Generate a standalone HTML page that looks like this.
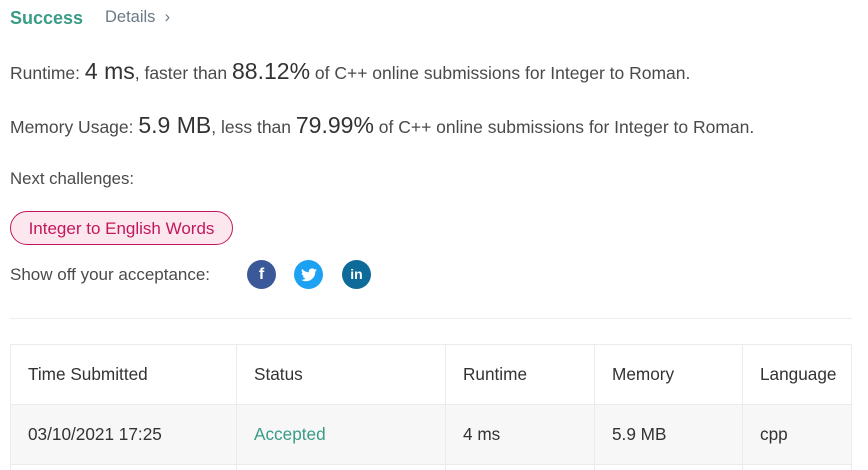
<!DOCTYPE html>
<html><head><meta charset="utf-8"><style>
*{margin:0;padding:0;box-sizing:border-box}
html,body{width:868px;height:470px;overflow:hidden}
body{background:#fff;font-family:"Liberation Sans",sans-serif;color:#4a4a4a;position:relative;font-size:17.5px}
.a{position:absolute;white-space:nowrap}
.big{font-size:23px;color:#333}
table{position:absolute;left:10px;top:344px;width:842px;border-collapse:collapse;font-size:17.2px;color:#333}
td{border:1px solid #ebebeb;height:60px;padding-left:17px}
tr.g td{background:#f7f7f7}
tr.e td{height:6px}
.ic{position:absolute;top:260px;width:29px;height:29px;border-radius:50%;color:#fff;font-weight:bold;text-align:center;line-height:29px;font-size:16px}
</style></head><body>
<div class="a" style="left:10px;top:8px;font-size:18px;font-weight:bold;color:#3a9b86">Success</div>
<div class="a" style="left:105px;top:8px;font-size:16.5px;color:#6b7a85">Details &nbsp;›</div>
<div class="a" style="left:10px;top:58px">Runtime: <span class="big">4 ms</span>, faster than <span class="big">88.12%</span> of C++ online submissions for Integer to Roman.</div>
<div class="a" style="left:10px;top:112px">Memory Usage: <span class="big">5.9 MB</span>, less than <span class="big">79.99%</span> of C++ online submissions for Integer to Roman.</div>
<div class="a" style="left:10px;top:169px;font-size:16.8px">Next challenges:</div>
<div class="a" style="left:10px;top:211px;width:223px;height:34px;border:1px solid #c2185b;border-radius:17px;background:#fde7ee;color:#c2185b;font-size:17px;text-align:center;line-height:33px">Integer to English Words</div>
<div class="a" style="left:10px;top:265px;font-size:17px">Show off your acceptance:</div>
<div class="ic" style="left:247px;background:#3b5998">f</div>
<div class="ic" style="left:294px;background:#1da1f2"><svg width="16" height="14" viewBox="0 0 24 20" style="margin-top:8px"><path fill="#fff" d="M24 2.4a10 10 0 0 1-2.8.8A5 5 0 0 0 23.3.5a10 10 0 0 1-3.1 1.2A4.9 4.9 0 0 0 11.8 6 14 14 0 0 1 1.7.9a4.9 4.9 0 0 0 1.5 6.6A4.9 4.9 0 0 1 1 6.9a4.9 4.9 0 0 0 3.9 4.8 4.9 4.9 0 0 1-2.2.1 4.9 4.9 0 0 0 4.6 3.4A9.9 9.9 0 0 1 0 17.2 14 14 0 0 0 7.5 19.4c9 0 14-7.5 14-14v-.6A10 10 0 0 0 24 2.4z"/></svg></div>
<div class="ic" style="left:342px;background:#0e6a99;font-size:14px">in</div>
<div class="a" style="left:10px;top:318px;width:842px;height:1px;background:#eee"></div>
<table>
<tr><td style="width:226px">Time Submitted</td><td style="width:209px">Status</td><td style="width:149px">Runtime</td><td style="width:148px">Memory</td><td>Language</td></tr>
<tr class="g"><td>03/10/2021 17:25</td><td style="color:#3a9b86">Accepted</td><td>4 ms</td><td>5.9 MB</td><td>cpp</td></tr>
<tr class="e"><td></td><td></td><td></td><td></td><td></td></tr>
</table>
</body></html>
